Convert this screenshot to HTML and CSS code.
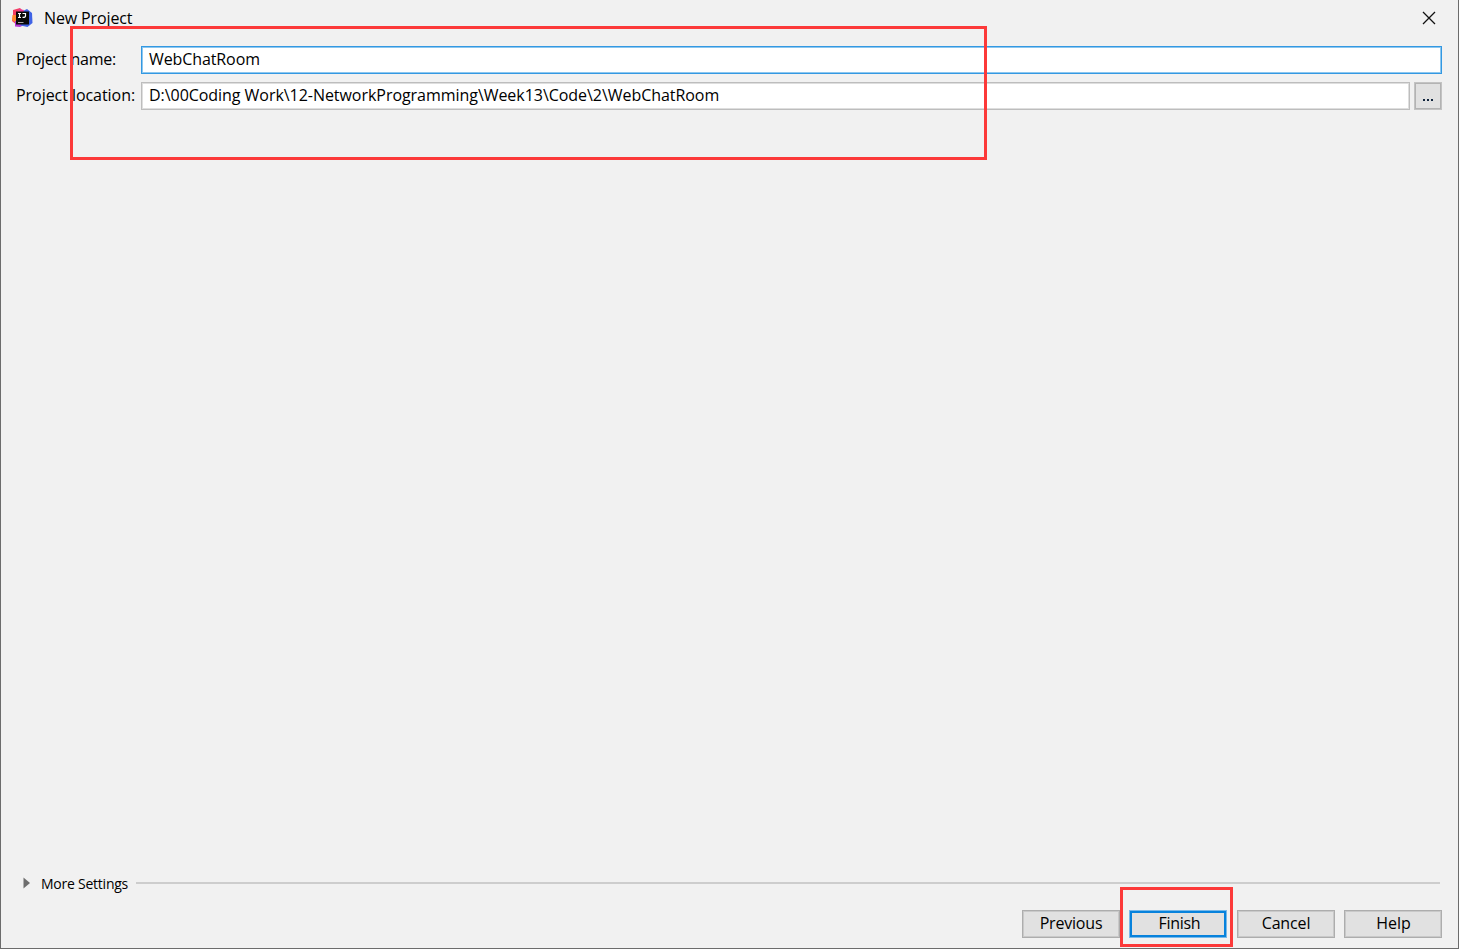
FILE: index.html
```html
<!DOCTYPE html>
<html lang="en">
<head>
<meta charset="utf-8">
<title>New Project</title>
<link rel="stylesheet" href="styles.css">
</head>
<body>
<main class="window">
  <header class="titlebar">
    <svg class="logo" width="22" height="22" viewBox="0 0 22 22" aria-hidden="true">
      <path d="M1 3 8 1l4 4-2 12-5 1-5-4 1-5z" fill="#f43f62"/>
      <path d="M.5 8H7v6l-3 2-4-3z" fill="#ff8a30"/>
      <path d="M3 14h6l3 4-4 2-5-.5z" fill="#b43bd5"/>
      <path d="m11 4 4-2 5 4 .5 10-5 4-7-1.5z" fill="#3f63e6"/>
      <path d="m7 2 5 1-1 3-5-2z" fill="#e83d96"/>
      <path d="M4 4.5h13v13H4z" fill="#080808"/>
      <path d="M6 6.5h3M7.5 6.5v4M6 10.5h3M10.5 6.5h3v2.6q0 1.5-3 1.2" fill="none" stroke="#fff" stroke-width="1.2"/>
      <path d="M6 15.5h5.5" stroke="#aaa"/>
    </svg>
    <h1 class="title">New Project</h1>
    <svg class="close" width="14" height="14" viewBox="0 0 14 14" aria-label="Close">
      <path d="m1 1 12 12M13 1 1 13" fill="none" stroke="#111" stroke-width="1.3"/>
    </svg>
  </header>
  <section class="form">
    <div class="row">
      <label class="label"><span class="name-label">Project name:</span></label>
      <div class="field focused"><span class="name-value">WebChatRoom</span></div>
    </div>
    <div class="row">
      <label class="label"><span class="location-label">Project location:</span></label>
      <div class="field"><span class="path-value">D:\00Coding Work\12-NetworkProgramming\Week13\Code\2\WebChatRoom</span></div>
      <button class="browse" aria-label="Browse"><i></i><i></i><i></i></button>
    </div>
  </section>
  <div class="more">
    <svg class="arrow" width="7" height="12" viewBox="0 0 7 12" aria-hidden="true"><path d="M.5.5 7 6 .5 11.5z" fill="#6e6e6e"/></svg>
    <span class="more-text">More Settings</span>
    <div class="rule"></div>
  </div>
  <footer class="actions">
    <button class="button previous">Previous</button>
    <button class="button primary">Finish</button>
    <button class="button cancel">Cancel</button>
    <button class="button help">Help</button>
  </footer>
</main>
<div class="mark mark-form"></div>
<div class="mark mark-finish"></div>
</body>
</html>
```
FILE: styles.css
```css
* { box-sizing: border-box; }
body { margin: 0; overflow: hidden; }
.window {
  display: flex;
  flex-direction: column;
  width: 1459px;
  height: 949px;
  border: solid #6c6c6c;
  border-width: 0 1px 1px;
  background: #f1f1f1;
  color: #000;
  font: 16px/24px "Open Sans", "Noto Sans", sans-serif;
  white-space: nowrap;
}
.titlebar { display: flex; align-items: center; height: 36px; padding: 0 22px 0 11px; }
.logo { margin-right: 10px; }
.title { margin: 0; font: inherit; letter-spacing: -.12px; }
.close { margin-left: auto; }
.form { display: flex; flex-direction: column; gap: 8px; padding: 10px 16px 0 15px; }
.row { display: flex; height: 28px; }
.label { width: 125px; line-height: 27px; }
.name-label { letter-spacing: -.24px; }
.location-label { letter-spacing: -.05px; }
.name-value { letter-spacing: -.1px; }
.path-value { letter-spacing: -.045px; }
.field {
  flex: 1;
  border: 1px solid #bdbdbd;
  box-shadow: inset 0 0 0 1px #dedede;
  background: #fff;
  padding-left: 7px;
  line-height: 25px;
}
.focused { border-color: #3398e2; box-shadow: inset 0 0 0 1px #8dc7ef; }
.browse {
  display: flex;
  justify-content: center;
  align-items: flex-end;
  gap: 2px;
  width: 28px;
  margin-left: 4px;
  padding: 0 0 7px;
  border: 1px solid #c3c3c3;
  box-shadow: inset 0 0 0 1px #b3b3b3;
  background: #e1e1e1;
}
.browse i { width: 2px; height: 2px; margin-bottom: 1px; background: #10243c; }
.more { display: flex; align-items: center; height: 24px; margin-top: auto; padding: 0 18px 0 22px; font-size: 14px; }
.arrow { margin-right: 11px; }
.more-text { width: 95px; padding-top: 2px; letter-spacing: -.24px; }
.rule { flex: 1; height: 2px; background: #cdcdcd; }
.actions { display: flex; justify-content: flex-end; gap: 9px; height: 53px; padding: 15px 16px 10px; }
.button {
  width: 98px;
  height: 28px;
  padding: 0 0 2px;
  border: 1px solid #adadad;
  box-shadow: inset 0 0 0 1px #c9c9c9;
  background: #e1e1e1;
  color: #000;
  font: inherit;
  line-height: 24px;
}
.previous { letter-spacing: -.2px; }
.primary { padding-left: 3px; letter-spacing: -.3px; border: 1px solid #78b9e9; box-shadow: inset 0 0 0 2px #0782dc; }
.cancel { margin-left: 1px; letter-spacing: -.15px; }
.help { padding-left: 1px; }
.mark { position: absolute; border: 3px solid #fc3939; pointer-events: none; }
.mark-form { left: 70px; top: 26px; width: 917px; height: 134px; }
.mark-finish { left: 1120px; top: 887px; width: 113px; height: 60px; }
```
